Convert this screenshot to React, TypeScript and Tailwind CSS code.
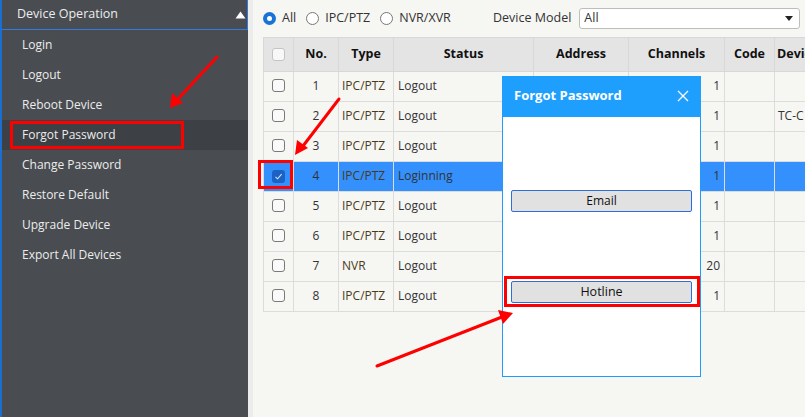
import { useState } from 'react'

const MENU = ['Login', 'Logout', 'Reboot Device', 'Forgot Password', 'Change Password', 'Restore Default', 'Upgrade Device', 'Export All Devices']

const ROWS = [
  { no: 1, type: 'IPC/PTZ', status: 'Logout', ch: '1', dev: '' },
  { no: 2, type: 'IPC/PTZ', status: 'Logout', ch: '1', dev: 'TC-C' },
  { no: 3, type: 'IPC/PTZ', status: 'Logout', ch: '1', dev: '' },
  { no: 4, type: 'IPC/PTZ', status: 'Loginning', ch: '1', dev: '', sel: true },
  { no: 5, type: 'IPC/PTZ', status: 'Logout', ch: '1', dev: '' },
  { no: 6, type: 'IPC/PTZ', status: 'Logout', ch: '1', dev: '' },
  { no: 7, type: 'NVR', status: 'Logout', ch: '20', dev: '' },
  { no: 8, type: 'IPC/PTZ', status: 'Logout', ch: '1', dev: '' },
]

function Check({ on }: { on?: boolean }) {
  if (on) {
    return (
      <span className="inline-flex w-[13px] h-[13px] rounded-[3px] bg-[#1c62c4] items-center justify-center">
        <svg width="9" height="9" viewBox="0 0 9 9">
          <path d="M1.5 4.8 L3.6 6.8 L7.6 2.2" stroke="#cfe3ff" strokeWidth="1.1" fill="none" />
        </svg>
      </span>
    )
  }
  return <span className="inline-block w-[13px] h-[13px] rounded-[3px] border border-[#7a7a7a] bg-[#fafafa]" />
}

function Radio({ on, label }: { on?: boolean; label: string }) {
  return (
    <span className="flex items-center gap-[6px] whitespace-nowrap">
      {on ? (
        <span className="w-[13px] h-[13px] rounded-full bg-[#1673d8] flex items-center justify-center">
          <span className="w-[5px] h-[5px] rounded-full bg-white" />
        </span>
      ) : (
        <span className="w-[13px] h-[13px] rounded-full border border-[#777] bg-white" />
      )}
      <span>{label}</span>
    </span>
  )
}

export default function App() {
  const [active] = useState(3)

  return (
    <div className="relative w-[805px] h-[417px] flex overflow-hidden text-[12px] text-[#333]" style={{ fontFamily: '"Open Sans", "Noto Sans", sans-serif' }}>
      {/* Sidebar */}
      <div className="w-[248px] shrink-0 bg-[#494c51] border-l-2 border-[#1a6fd0] text-[#ececec]">
        <div className="h-[30px] flex items-center justify-between pl-[15px] pr-[1px] border-b border-r border-[#2f7be0] text-[12.5px]">
          <span>Device Operation</span>
          <svg width="11" height="8" viewBox="0 0 11 8"><path d="M0.5 7.5 L5.5 0.5 L10.5 7.5 Z" fill="#fff" /></svg>
        </div>
        {MENU.map((m, i) => (
          <div key={m} className={`h-[30px] flex items-center pl-[20px] ${i === active ? 'bg-[#3d4045]' : ''}`}>
            {m}
          </div>
        ))}
      </div>
      <div className="w-[5px] shrink-0 bg-[#ececec]" />

      {/* Main */}
      <div className="flex-1 bg-[#f6f6f3] pl-[10px] overflow-hidden">
        <div className="h-[37px] flex items-center text-[12.5px] pr-[5px]">
          <div className="w-[230px] shrink-0 flex items-center gap-[10px]">
            <Radio on label="All" />
            <Radio label="IPC/PTZ" />
            <Radio label="NVR/XVR" />
          </div>
          <span className="whitespace-nowrap shrink-0">Device Model</span>
          <div className="ml-[8px] flex-1 h-[21px] bg-white border border-[#bdbdbd] rounded-[3px] flex items-center justify-between pl-[4px] pr-[6px]">
            <span>All</span>
            <svg width="8" height="5" viewBox="0 0 8 5"><path d="M0 0 H8 L4 5 Z" fill="#222" /></svg>
          </div>
        </div>

        <table className="table-fixed border-collapse w-[600px]">
          <colgroup>
            <col className="w-[30px]" />
            <col className="w-[45px]" />
            <col className="w-[55px]" />
            <col className="w-[140px]" />
            <col className="w-[95px]" />
            <col className="w-[96px]" />
            <col className="w-[50px]" />
            <col className="w-[89px]" />
          </colgroup>
          <thead>
            <tr className="h-[34px] bg-[#e4e4e4] font-bold text-[#111] text-[12.5px]">
              <th className="border border-[#d8d8d8] text-center align-middle"><span className="inline-block w-[13px] h-[13px] rounded-[3px] border border-[#c4c4c4] bg-[#f8f8f8] align-middle" /></th>
              <th className="border border-[#d8d8d8]">No.</th>
              <th className="border border-[#d8d8d8]">Type</th>
              <th className="border border-[#d8d8d8]">Status</th>
              <th className="border border-[#d8d8d8]">Address</th>
              <th className="border border-[#d8d8d8]">Channels</th>
              <th className="border border-[#d8d8d8]">Code</th>
              <th className="border border-[#d8d8d8] text-left pl-[2px] whitespace-nowrap overflow-hidden">Device</th>
            </tr>
          </thead>
          <tbody>
            {ROWS.map((r) => (
              <tr key={r.no} className={`h-[30px] ${r.sel ? 'bg-[#3390fc]' : 'bg-[#f6f6f3]'}`}>
                <td className="border border-[#dcdcdc] text-center align-middle leading-none"><Check on={r.sel} /></td>
                <td className="border border-[#dcdcdc] text-center pb-px">{r.no}</td>
                <td className="border border-[#dcdcdc] pl-[3px] pb-px text-[#4a3a1a]">{r.type}</td>
                <td className="border border-[#dcdcdc] pl-[4px] pb-px">{r.status}</td>
                <td className="border border-[#dcdcdc]" />
                <td className="border border-[#dcdcdc] text-right pr-[4px] pb-px">{r.ch}</td>
                <td className="border border-[#dcdcdc]" />
                <td className="border border-[#dcdcdc] pl-[3px] pb-px whitespace-nowrap overflow-hidden">{r.dev}</td>
              </tr>
            ))}
          </tbody>
        </table>
      </div>

      {/* Forgot Password dialog */}
      <div className="absolute left-[502px] top-[76px] w-[199px] h-[301px] bg-white border border-[#1e9cfb] flex flex-col">
        <div className="h-[41px] bg-[#1e9ffe] flex items-center justify-between pl-[12px] pr-[12px] pb-[2px] -mx-px -mt-px">
          <span className="text-white font-bold text-[13px]">Forgot Password</span>
          <svg width="12" height="12" viewBox="0 0 12 12"><path d="M1 1 L11 11 M11 1 L1 11" stroke="#fff" strokeWidth="1.3" /></svg>
        </div>
        <div className="px-[8px] pt-[73px] flex flex-col">
          <button className="h-[22px] bg-[#e1e1e1] border border-[#2a6fdb] rounded-[2px] text-[12px] text-[#111]">Email</button>
          <button className="mt-[69px] h-[22px] bg-[#e1e1e1] border border-[#2a6fdb] rounded-[2px] text-[12.5px] text-[#111]">Hotline</button>
        </div>
      </div>

      {/* Annotations */}
      <div className="absolute left-[10px] top-[121px] w-[174px] h-[28px] border-[3px] border-[#ff0000] pointer-events-none" />
      <div className="absolute left-[258px] top-[160px] w-[35px] h-[29px] border-[3px] border-[#ff0000] pointer-events-none" />
      <div className="absolute left-[504px] top-[276px] w-[196px] h-[31px] border-[3px] border-[#ff0000] pointer-events-none" />
      <svg className="absolute inset-0 pointer-events-none" width="805" height="417">
        <line x1="217" y1="57" x2="177" y2="100" stroke="#ff0000" strokeWidth="3" strokeLinecap="round" />
        <polygon points="170,108 172,93 183,103" fill="#ff0000" />
        <line x1="339" y1="99" x2="303" y2="146" stroke="#ff0000" strokeWidth="3" strokeLinecap="round" />
        <polygon points="295,155 297,140 308,148" fill="#ff0000" />
        <line x1="377" y1="366" x2="502" y2="317" stroke="#ff0000" strokeWidth="3" strokeLinecap="round" />
        <polygon points="513,313 498,310 503,324" fill="#ff0000" />
      </svg>
    </div>
  )
}
